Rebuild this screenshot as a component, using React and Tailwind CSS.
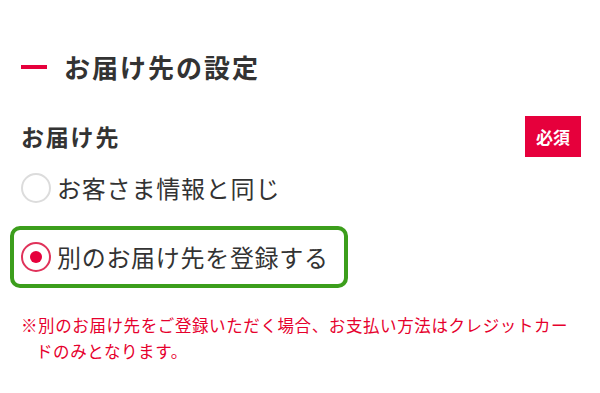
import React from "react";

const font = { fontFamily: '"Noto Sans CJK JP", "Noto Sans", sans-serif' };

const Radio = ({ checked }) => (
  <span
    className={`flex h-[30px] w-[30px] shrink-0 items-center justify-center rounded-full border-2 bg-white ${
      checked ? "border-[#e0325a]" : "border-[#dcdcdc]"
    }`}
  >
    {checked && <span className="h-[12px] w-[12px] rounded-full bg-[#e6003c]" />}
  </span>
);

export default function App() {
  return (
    <div
      className="min-h-[393px] w-[600px] bg-white pl-[21px] pr-[19px] pt-[47px] text-[#333333]"
      style={font}
    >
      {/* section title */}
      <h2 className="flex h-[40px] items-center text-[26px] font-bold leading-none tracking-[2px]">
        <span className="mr-[17px] h-[4px] w-[26px] bg-[#e6003c]" />
        お届け先の設定
      </h2>

      {/* field label */}
      <div className="mt-[29px] flex h-[41px] items-center justify-between">
        <span className="text-[23px] font-bold tracking-[1.8px]">お届け先</span>
        <span className="flex h-[41px] w-[56px] items-center justify-center bg-[#e6003c] text-[17px] font-bold text-white">
          必須
        </span>
      </div>

      {/* options */}
      <label className="mt-[11px] flex h-[40px] items-center gap-[6px] text-[24px] tracking-[0.8px]">
        <Radio />
        お客さま情報と同じ
      </label>

      <label className="-ml-[11px] mt-[18px] flex h-[62px] w-[338px] items-center gap-[6px] rounded-[10px] border-4 border-[#3c9e1c] pl-[7px] text-[24px] tracking-[0.7px]">
        <Radio checked />
        別のお届け先を登録する
      </label>

      {/* note */}
      <p className="mt-[24px] text-[16.5px] leading-[26px] tracking-[0.6px] text-[#e6002d]">
        <span className="block whitespace-nowrap">
          ※別のお届け先をご登録いただく場合、お支払い方法はクレジットカー
        </span>
        <span className="block pl-[15px]">ドのみとなります。</span>
      </p>
    </div>
  );
}
